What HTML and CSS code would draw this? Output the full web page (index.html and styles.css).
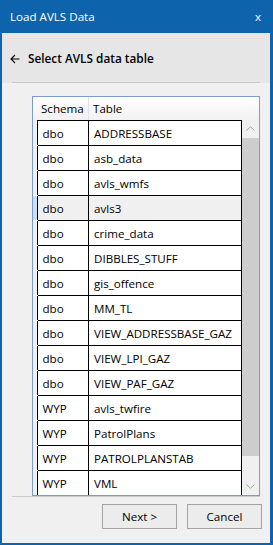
FILE: index.html
```html
<!DOCTYPE html>
<html>
<head>
<meta charset="utf-8">
<link rel="stylesheet" href="styles.css">
</head>
<body>
<div class="window">
  <div class="titlebar">
    <span class="title">Load AVLS Data</span>
    <span class="close">x</span>
  </div>
  <div class="header">
    <svg class="back" width="10" height="10" viewBox="0 0 10 10"><path d="M9.5 5H1M5 1L1 5l4 4" fill="none" stroke="#000" stroke-width="1.1"/></svg>
    <span class="heading">Select AVLS data table</span>
  </div>
  <div class="sep top"></div>
  <div class="body">
    <div class="grid">
      <div class="rows">
        <table>
          <thead>
            <tr><th class="gut"></th><th class="c1">Schema</th><th class="c2">Table</th></tr>
          </thead>
          <tbody>
            <tr><td class="gut"></td><td>dbo</td><td>ADDRESSBASE</td></tr>
            <tr><td class="gut"></td><td>dbo</td><td>asb_data</td></tr>
            <tr><td class="gut"></td><td>dbo</td><td>avls_wmfs</td></tr>
            <tr class="sel"><td class="gut"></td><td>dbo</td><td>avls3</td></tr>
            <tr><td class="gut"></td><td>dbo</td><td>crime_data</td></tr>
            <tr><td class="gut"></td><td>dbo</td><td>DIBBLES_STUFF</td></tr>
            <tr><td class="gut"></td><td>dbo</td><td>gis_offence</td></tr>
            <tr><td class="gut"></td><td>dbo</td><td>MM_TL</td></tr>
            <tr><td class="gut"></td><td>dbo</td><td>VIEW_ADDRESSBASE_GAZ</td></tr>
            <tr><td class="gut"></td><td>dbo</td><td>VIEW_LPI_GAZ</td></tr>
            <tr><td class="gut"></td><td>dbo</td><td>VIEW_PAF_GAZ</td></tr>
            <tr><td class="gut"></td><td>WYP</td><td>avls_twfire</td></tr>
            <tr><td class="gut"></td><td>WYP</td><td>PatrolPlans</td></tr>
            <tr><td class="gut"></td><td>WYP</td><td>PATROLPLANSTAB</td></tr>
            <tr><td class="gut"></td><td>WYP</td><td>VML</td></tr>
          </tbody>
        </table>
      </div>
      <div class="scroll">
        <div class="scroll-head"></div>
        <div class="arrow"><svg width="9" height="5" viewBox="0 0 9 5"><path d="M0.5 4.5L4.5 0.8L8.5 4.5" fill="none" stroke="#a0a0a0" stroke-width="1"/></svg></div>
        <div class="track"><div class="thumb"></div></div>
        <div class="arrow"><svg width="9" height="5" viewBox="0 0 9 5"><path d="M0.5 0.5L4.5 4.2L8.5 0.5" fill="none" stroke="#a0a0a0" stroke-width="1"/></svg></div>
      </div>
    </div>
  </div>
  <div class="sep bottom"></div>
  <div class="buttons">
    <button class="btn">Next &gt;</button>
    <button class="btn">Cancel</button>
  </div>
</div>
</body>
</html>
```
FILE: styles.css
```css
html, body {
  margin: 0;
  padding: 0;
}
body {
  width: 273px;
  height: 545px;
  font-family: "Open Sans", "Noto Sans", sans-serif;
  font-size: 11.6px;
  color: #000;
}
.window {
  box-sizing: border-box;
  width: 273px;
  height: 545px;
  background: #f0f0f0;
  border-left: 2px solid #0d64ad;
  border-right: 3px solid #0d64ad;
  border-bottom: 2px solid #0d64ad;
  display: flex;
  flex-direction: column;
}
.titlebar {
  height: 32px;
  background: #0d64ad;
  color: #fff;
  display: flex;
  align-items: center;
  justify-content: space-between;
  padding: 0 12px 1px 10px;
  font-size: 11.6px;
  margin-left: -2px;
  margin-right: -3px;
}
.header {
  height: 50px;
  background: #e6e6e6;
  display: flex;
  align-items: center;
  padding-left: 8px;
  box-sizing: border-box;
}
.back {
  margin-right: 8px;
  margin-top: 1px;
}
.heading {
  font-weight: 600;
  font-size: 11.8px;
}
.sep {
  height: 1px;
  background: #c9c9c9;
  margin: 0 10px;
}
.sep.top {
  margin-top: -1px;
}
.body {
  padding: 13px 10px 0 30px;
}
.grid {
  box-sizing: border-box;
  height: 400px;
  border: 1px solid #7c9ccb;
  background: #fff;
  display: flex;
}
.rows {
  flex: 1;
  overflow: hidden;
}
table {
  border-collapse: collapse;
  width: 100%;
  table-layout: fixed;
}
th {
  height: 23px;
  padding: 0 0 0 4px;
  text-align: left;
  font-weight: normal;
  background: linear-gradient(#ffffff, #f1f1f1);
  border-right: 1px solid #e3e3e3;
  border-bottom: 1px solid #000;
}
th.gut {
  width: 4px;
  padding: 0;
  border-right: 0;
  border-bottom: 0;
}
th.c1 {
  width: 47px;
}
th.c2 {
  border-right: 0;
}
td {
  height: 24px;
  padding: 0 0 0 5px;
  border: 1px solid #000;
  border-top: 0;
  white-space: nowrap;
}
td.gut {
  padding: 0;
  background: #f0f0f0;
  border: 0;
  border-bottom: 1px solid #fff;
  border-right: 1px solid #000;
}
tr.sel td {
  background: #f0f0f0;
}
tr.sel td.gut {
  background: #c7e0f4;
}
.scroll {
  width: 17px;
  display: flex;
  flex-direction: column;
  background: #f0f0f0;
}
.scroll-head {
  height: 23px;
  background: linear-gradient(#ffffff, #f1f1f1);
}
.arrow {
  height: 17px;
  display: flex;
  align-items: center;
  justify-content: center;
}
.track {
  flex: 1;
  padding: 1px 0 22px;
  display: flex;
}
.thumb {
  flex: 1;
  background: #cdcdcd;
}
.buttons {
  display: flex;
  justify-content: flex-end;
  gap: 10px;
  padding: 7px 8px 0 0;
}
.btn {
  width: 75px;
  height: 25px;
  font-family: inherit;
  font-size: 11.6px;
  background: #ececec;
  border: 1px solid #a3a3a3;
  color: #000;
  padding: 0;
}
```
